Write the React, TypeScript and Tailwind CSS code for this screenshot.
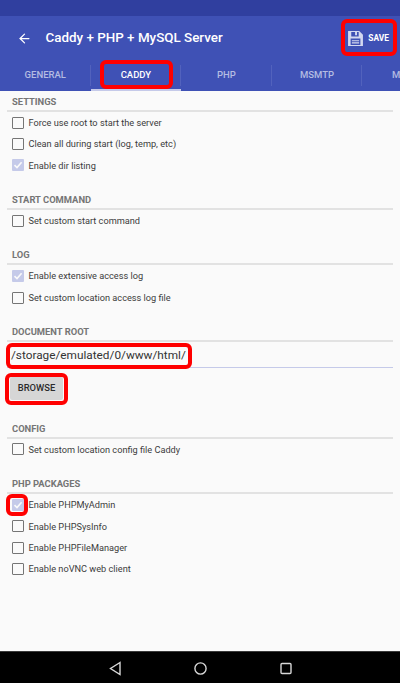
import { ArrowLeft } from "lucide-react";

const TABS = ["GENERAL", "CADDY", "PHP", "MSMTP", "MYSQL"];

function SectionHeader({ title }: { title: string }) {
  return (
    <div className="mx-[7px] flex h-[19px] items-start border-b-2 border-[#e2e2e2] pl-[5px]">
      <span className="text-[9.4px] leading-[18px] font-bold text-[#757575]">{title}</span>
    </div>
  );
}

function CheckRow({ label, checked }: { label: string; checked?: boolean }) {
  return (
    <div className="flex h-[21.4px] items-center pl-3">
      {checked ? (
        <span className="flex h-3 w-3 items-center justify-center rounded-[1px] bg-[#c5cae9]">
          <svg viewBox="0 0 12 12" className="h-3 w-3" fill="none" stroke="#fafafa" strokeWidth="1.6">
            <path d="M2.5 6.2 L5 8.6 L9.6 3.2" />
          </svg>
        </span>
      ) : (
        <span className="box-border h-3 w-3 rounded-[1px] border-[1.5px] border-[#757575]" />
      )}
      <span className="ml-[4.5px] text-[9.2px] text-[#3c3c3c]">{label}</span>
    </div>
  );
}

function SaveIcon() {
  return (
    <svg viewBox="0 0 16 16" className="h-[17px] w-[17px]" fill="#d3d8f0">
      <path
        fillRule="evenodd"
        d="M1 1 H11.5 L15 4.5 V15 H1 Z M4 1.8 V6 H11 V1.8 H9.4 V5 H7.6 V1.8 Z M3.4 8 V14 H12.6 V8 Z"
      />
      <path d="M4.6 9.6 H11.4 V10.6 H4.6 Z M4.6 11.6 H11.4 V12.6 H4.6 Z" />
    </svg>
  );
}

export default function App() {
  return (
    <div className="relative flex h-[683px] w-[400px] flex-col overflow-hidden bg-[#fafafa] font-['Roboto',sans-serif]">
      <div className="h-4 bg-[#303f9f]" />

      <div className="bg-[#3f51b5]">
        <div className="flex h-11 items-center">
          <ArrowLeft className="ml-[17px] h-[15px] w-[15px] text-white" strokeWidth={2} />
          <span className="ml-[13.5px] text-[13.4px] font-medium text-white">
            Caddy + PHP + MySQL Server
          </span>
          <div className="ml-auto mr-[11px] flex items-center gap-1">
            <SaveIcon />
            <span className="text-[8.4px] font-bold text-white">SAVE</span>
          </div>
        </div>
        <div className="flex h-[31px]">
          {TABS.map((tab, i) => (
            <div key={tab} className="relative flex h-full w-[90.6px] shrink-0 items-center justify-center">
              <span
                className={
                  tab === "CADDY"
                    ? "text-[9.5px] font-medium text-white"
                    : "text-[9.5px] font-medium text-[#b4bce2]"
                }
              >
                {tab}
              </span>
              {tab === "CADDY" && <div className="absolute inset-x-0 bottom-0 h-0.5 bg-[#c5cae9]" />}
              {i < TABS.length - 1 && (
                <div className="absolute right-0 top-[5px] h-[21px] w-px bg-[#5262bd]" />
              )}
            </div>
          ))}
        </div>
      </div>

      <div className="flex-1 pt-[2px]">
        <SectionHeader title="SETTINGS" />
        <CheckRow label="Force use root to start the server" />
        <CheckRow label="Clean all during start (log, temp, etc)" />
        <CheckRow label="Enable dir listing" checked />

        <div className="mt-[14.8px]">
          <SectionHeader title="START COMMAND" />
          <CheckRow label="Set custom start command" />
        </div>

        <div className="mt-[15.1px]">
          <SectionHeader title="LOG" />
          <CheckRow label="Enable extensive access log" checked />
          <CheckRow label="Set custom location access log file" />
        </div>

        <div className="mt-[15.2px]">
          <SectionHeader title="DOCUMENT ROOT" />
          <div className="mx-[7px] flex h-[25.5px] items-end border-b border-[#c5cae9] pb-[2px] pl-[4px] text-[11.8px] text-[#333333]">
            /storage/emulated/0/www/html/
          </div>
          <div className="ml-[10px] mt-[9px] flex h-[23px] w-[53px] items-center justify-center rounded-[2px] bg-[#d6d6d6] text-[9.4px] font-medium text-[#2b2b2b]">
            BROWSE
          </div>
        </div>

        <div className="mt-[19.8px]">
          <SectionHeader title="CONFIG" />
          <CheckRow label="Set custom location config file Caddy" />
        </div>

        <div className="mt-[15.3px]">
          <SectionHeader title="PHP PACKAGES" />
          <CheckRow label="Enable PHPMyAdmin" checked />
          <CheckRow label="Enable PHPSysInfo" />
          <CheckRow label="Enable PHPFileManager" />
          <CheckRow label="Enable noVNC web client" />
        </div>
      </div>

      <div className="flex h-[32px] items-center justify-center border-t border-[#3a3a3a] bg-black">
        <svg viewBox="0 0 240 32" className="h-[32px] w-[240px]" fill="none" stroke="#d8d8d8" strokeWidth="1.4">
          <path d="M40 10.5 L30.5 16.5 L40 22.5 Z" />
          <circle cx="120.5" cy="16.5" r="5.6" />
          <rect x="201" y="11.5" width="10" height="10" rx="1" />
        </svg>
      </div>

      {/* red annotation boxes */}
      <div className="absolute left-[341px] top-[19px] h-[37px] w-[56px] rounded-[6px] border-4 border-[#ff0000]" />
      <div className="absolute left-[100px] top-[60px] h-[29px] w-[73px] rounded-[6px] border-4 border-[#ff0000]" />
      <div className="absolute left-[6px] top-[343px] h-[26px] w-[186px] rounded-[6px] border-4 border-[#ff0000]" />
      <div className="absolute left-[5px] top-[373px] h-[32px] w-[63px] rounded-[6px] border-4 border-[#ff0000]" />
      <div className="absolute left-[6px] top-[494px] h-[22px] w-[22px] rounded-[6px] border-4 border-[#ff0000]" />
    </div>
  );
}
